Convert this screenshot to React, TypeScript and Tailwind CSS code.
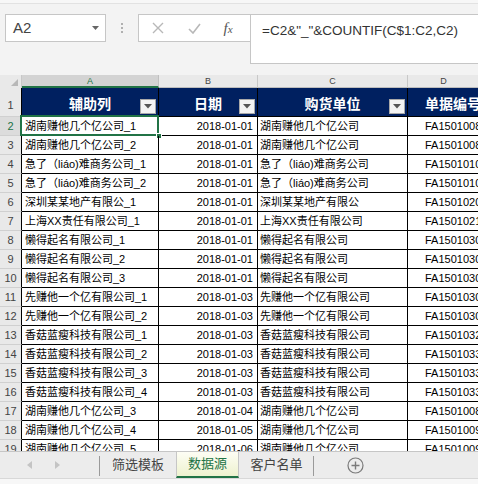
import React from "react";

const rows: [string, string, string, string][] = [
  ["湖南赚他几个亿公司_1", "2018-01-01", "湖南赚他几个亿公司", "FA15010080"],
  ["湖南赚他几个亿公司_2", "2018-01-01", "湖南赚他几个亿公司", "FA15010080"],
  ["急了（liáo)难商务公司_1", "2018-01-01", "急了（liáo)难商务公司", "FA15010100"],
  ["急了（liáo)难商务公司_2", "2018-01-01", "急了（liáo)难商务公司", "FA15010100"],
  ["深圳某某地产有限公_1", "2018-01-01", "深圳某某地产有限公", "FA15010200"],
  ["上海XX责任有限公司_1", "2018-01-01", "上海XX责任有限公司", "FA15010210"],
  ["懒得起名有限公司_1", "2018-01-01", "懒得起名有限公司", "FA15010300"],
  ["懒得起名有限公司_2", "2018-01-01", "懒得起名有限公司", "FA15010300"],
  ["懒得起名有限公司_3", "2018-01-01", "懒得起名有限公司", "FA15010300"],
  ["先赚他一个亿有限公司_1", "2018-01-03", "先赚他一个亿有限公司", "FA15010300"],
  ["先赚他一个亿有限公司_2", "2018-01-03", "先赚他一个亿有限公司", "FA15010300"],
  ["香菇蓝瘦科技有限公司_1", "2018-01-03", "香菇蓝瘦科技有限公司", "FA15010320"],
  ["香菇蓝瘦科技有限公司_2", "2018-01-03", "香菇蓝瘦科技有限公司", "FA15010330"],
  ["香菇蓝瘦科技有限公司_3", "2018-01-03", "香菇蓝瘦科技有限公司", "FA15010330"],
  ["香菇蓝瘦科技有限公司_4", "2018-01-03", "香菇蓝瘦科技有限公司", "FA15010330"],
  ["湖南赚他几个亿公司_3", "2018-01-04", "湖南赚他几个亿公司", "FA15010080"],
  ["湖南赚他几个亿公司_4", "2018-01-05", "湖南赚他几个亿公司", "FA15010090"],
  ["湖南赚他几个亿公司_5", "2018-01-06", "湖南赚他几个亿公司", "FA15010090"],
];

function FilterBtn() {
  return (
    <div className="absolute right-[2px] bottom-[2px] w-[16px] h-[15px] border border-[#a8a8a8] bg-[#f3f3f3] flex items-center justify-center">
      <svg width="8" height="5" viewBox="0 0 8 5">
        <polygon points="0,0 8,0 4,4.5" fill="#555" />
      </svg>
    </div>
  );
}

function HeaderCell({ w, label }: { w: string; label: string }) {
  return (
    <div className={`${w} relative shrink-0 h-full bg-[#002060] border-r border-b border-black flex items-end justify-center pb-[3px]`}>
      <span className="text-white font-bold text-[14px] leading-[18px]">{label}</span>
      <FilterBtn />
    </div>
  );
}

export default function App() {
  return (
    <div className="w-[478px] h-[484px] overflow-hidden bg-[#f3f3f3] flex flex-col font-['Liberation_Sans','Noto_Sans_CJK_SC',sans-serif]">
      {/* top bar */}
      <div className="h-[75px] shrink-0 flex flex-col">
        <div className="h-[4px] border-b border-[#e2e2e2] bg-[#f7f7f7]" />
        <div className="flex items-start pt-[10px] pl-[5px]">
          <div className="w-[101px] h-[28px] bg-white border border-[#c6c6c6] flex items-center justify-between pl-[7px] pr-[6px]">
            <span className="text-[15px] text-[#444]">A2</span>
            <svg width="7" height="4" viewBox="0 0 7 4">
              <polygon points="0,0 7,0 3.5,4" fill="#666" />
            </svg>
          </div>
          <div className="w-[32px] h-[28px] flex flex-col items-center justify-center gap-[2px]">
            <div className="w-[2px] h-[2px] bg-[#b0b0b0]" />
            <div className="w-[2px] h-[2px] bg-[#b0b0b0]" />
            <div className="w-[2px] h-[2px] bg-[#b0b0b0]" />
          </div>
          <div className="w-[110px] h-[28px] bg-white border border-[#c6c6c6] border-r-0 flex items-center">
            <span className="w-[37px] flex justify-center">
              <svg width="12" height="12" viewBox="0 0 12 12">
                <path d="M1 1 L11 11 M11 1 L1 11" stroke="#b8b8b8" strokeWidth="1.4" />
              </svg>
            </span>
            <span className="w-[37px] flex justify-center">
              <svg width="13" height="11" viewBox="0 0 13 11">
                <path d="M1 6 L5 10 L12 1" stroke="#b8b8b8" strokeWidth="1.6" fill="none" />
              </svg>
            </span>
            <span className="w-[30px] flex items-baseline justify-center italic text-[#555] font-['Liberation_Serif',serif] leading-none">
              <span className="text-[15px]">f</span>
              <span className="text-[11px]">x</span>
            </span>
          </div>
          <div className="w-[2px] h-[28px] bg-white border-y border-[#c6c6c6]" />
          <div className="flex-1 h-[50px] bg-white border border-[#c6c6c6] border-r-0 pl-[11px] pt-[3px]">
            <span className="text-[13.5px] text-[#333] whitespace-nowrap">=C2&amp;"_"&amp;COUNTIF(C$1:C2,C2)</span>
          </div>
        </div>
      </div>

      {/* column header row */}
      <div className="h-[13px] shrink-0 flex bg-[#e9e9e9] text-[9px] leading-[12px] text-[#444]">
        <div className="w-[22px] shrink-0 border-r border-[#c8c8c8] flex items-end justify-end pr-[3px] pb-[2px]">
          <svg width="7" height="7" viewBox="0 0 7 7">
            <polygon points="7,0 7,7 0,7" fill="#b8b8b8" />
          </svg>
        </div>
        <div className="w-[137px] shrink-0 bg-[#d3d3d3] border-r border-[#c0c0c0] border-b-2 border-b-[#217346] text-center text-[#217346]">A</div>
        <div className="w-[99px] shrink-0 border-r border-[#c8c8c8] border-b border-b-[#bdbdbd] text-center">B</div>
        <div className="w-[150px] shrink-0 border-r border-[#c8c8c8] border-b border-b-[#bdbdbd] text-center">C</div>
        <div className="w-[140px] shrink-0 border-b border-[#bdbdbd] text-center pr-[69px]">D</div>
      </div>

      {/* grid */}
      <div className="flex-1 overflow-hidden bg-white">
        <div className="h-[29px] flex">
          <div className="w-[22px] shrink-0 bg-[#e9e9e9] border-r border-black border-b border-b-[#d0d0d0] text-[11px] text-[#444] flex items-end justify-center pb-[3px]">1</div>
          <HeaderCell w="w-[137px]" label="辅助列" />
          <HeaderCell w="w-[99px]" label="日期" />
          <HeaderCell w="w-[150px]" label="购货单位" />
          <div className="w-[140px] shrink-0 h-full bg-[#002060] border-b border-black flex items-end pl-[17px] pb-[3px]">
            <span className="text-white font-bold text-[14px] leading-[18px] whitespace-nowrap">单据编号</span>
          </div>
        </div>
        {rows.map((r, i) => (
          <div key={i} className="h-[19px] flex text-[11px] text-black">
            <div className={`w-[22px] shrink-0 ${i === 0 ? "bg-[#dcdcdc] text-[#217346]" : "bg-[#e9e9e9] text-[#444]"} border-r border-black border-b border-b-[#d0d0d0] flex items-center justify-center`}>
              {i + 2}
            </div>
            <div className="w-[137px] shrink-0 relative border-r border-b border-black flex items-center pl-[3px] whitespace-nowrap overflow-visible">
              {r[0]}
              {i === 0 && (
                <>
                  <div className="absolute -left-[2px] -top-[2px] -right-[1px] -bottom-[1px] border-2 border-[#217346]" />
                  <div className="absolute -right-[4px] -bottom-[4px] w-[6px] h-[6px] bg-[#217346] border border-white" />
                </>
              )}
            </div>
            <div className="w-[99px] shrink-0 border-r border-b border-black flex items-center justify-end pr-[4px]">{r[1]}</div>
            <div className="w-[150px] shrink-0 border-r border-b border-black flex items-center pl-[2px] whitespace-nowrap">{r[2]}</div>
            <div className="w-[140px] shrink-0 border-b border-black flex items-center pl-[17px] whitespace-nowrap">{r[3]}</div>
          </div>
        ))}
      </div>

      {/* sheet tabs */}
      <div className="h-[27px] shrink-0 flex bg-[#ececec] border-t border-[#c6c6c6] text-[13px] text-[#444]">
        <div className="w-[100px] shrink-0 flex items-center relative">
          <svg className="ml-[27px]" width="5" height="8" viewBox="0 0 5 8">
            <polygon points="5,0 5,8 0,4" fill="#c4c4c4" />
          </svg>
          <svg className="ml-[23px]" width="5" height="8" viewBox="0 0 5 8">
            <polygon points="0,0 0,8 5,4" fill="#c4c4c4" />
          </svg>
          <div className="absolute right-0 top-[4px] h-[20px] w-[1px] bg-[#9a9a9a]" />
        </div>
        <div className="w-[76px] shrink-0 flex items-center justify-center">筛选模板</div>
        <div className="w-[63px] shrink-0 flex items-center justify-center bg-gradient-to-b from-[#fdfdf4] to-[#eef2cf] border-x border-[#c6c6c6] border-b-2 border-b-[#217346] text-[#217346]">数据源</div>
        <div className="w-[75px] shrink-0 flex items-center justify-center relative">
          客户名单
          <div className="absolute right-0 top-[4px] h-[20px] w-[1px] bg-[#9a9a9a]" />
        </div>
        <div className="flex-1 flex items-center pl-[33px]">
          <svg width="17" height="17" viewBox="0 0 17 17">
            <circle cx="8.5" cy="8.5" r="7.5" stroke="#7a7a7a" strokeWidth="1.2" fill="none" />
            <path d="M8.5 4.5 V12.5 M4.5 8.5 H12.5" stroke="#7a7a7a" strokeWidth="1.4" />
          </svg>
        </div>
      </div>
      <div className="h-[6px] shrink-0 bg-[#f7f7f7] border-t border-[#d8d8d8]" />
    </div>
  );
}
